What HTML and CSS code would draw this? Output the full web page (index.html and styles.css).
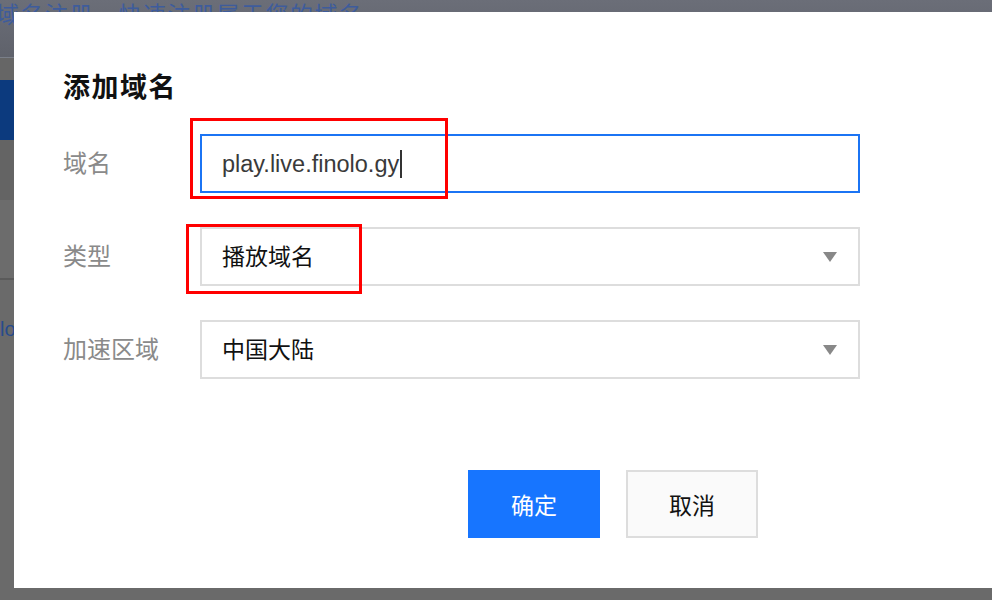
FILE: index.html
```html
<!DOCTYPE html>
<html lang="zh-CN">
<head>
<meta charset="utf-8">
<title>添加域名</title>
<link rel="stylesheet" href="styles.css">
</head>
<body>
<div class="page">
  <div class="topbar"><span class="crumb">域名注册，快速注册属于您的域名</span></div>
  <div class="band band-a"></div>
  <div class="band band-blue"></div>
  <div class="band band-b"></div>
  <div class="band band-c"></div>
  <div class="band band-d"><span class="link">Hello</span></div>
</div>

<div class="dialog">
  <h2 class="title">添加域名</h2>
  <div class="form">
    <div class="row">
      <label class="label">域名</label>
      <div class="field">
        <div class="input focused"><span class="value">play.live.finolo.gy</span><span class="caret"></span></div>
        <div class="mark mark-1"></div>
      </div>
    </div>
    <div class="row">
      <label class="label">类型</label>
      <div class="field">
        <div class="input select"><span class="value">播放域名</span><span class="arrow"></span></div>
        <div class="mark mark-2"></div>
      </div>
    </div>
    <div class="row">
      <label class="label">加速区域</label>
      <div class="field">
        <div class="input select"><span class="value">中国大陆</span><span class="arrow"></span></div>
      </div>
    </div>
  </div>
  <div class="actions">
    <button class="btn btn-primary">确定</button>
    <button class="btn btn-default">取消</button>
  </div>
</div>
</body>
</html>
```

FILE: styles.css
```css
html, body {
  margin: 0;
  padding: 0;
  width: 992px;
  height: 600px;
  overflow: hidden;
  background: #676767;
  font-family: "Liberation Sans", "Noto Sans CJK SC", sans-serif;
}

.page {
  width: 992px;
}

.topbar {
  height: 58px;
  background: linear-gradient(#6b6e78, #5f626b);
  border-bottom: 1px solid #7a7f89;
  box-sizing: border-box;
  overflow: hidden;
}

.crumb {
  display: block;
  margin-left: -4px;
  margin-top: 0;
  font-size: 23px;
  line-height: 30px;
  letter-spacing: 1.5px;
  color: #3e5c9c;
  white-space: nowrap;
}

.band { width: 100%; }
.band-a { height: 22px; background: #666666; }
.band-blue { height: 60px; background: #0c3a7e; }
.band-b { height: 60px; background: #646464; }
.band-c { height: 80px; background: #6c6c6c; border-bottom: 2px solid #5a5a5a; box-sizing: border-box; }
.band-d { height: 320px; background: #6a6a6a; padding-top: 36px; box-sizing: border-box; }

.link {
  display: block;
  margin-left: -30px;
  font-size: 20px;
  line-height: 26px;
  color: #274b8c;
}

.dialog {
  position: absolute;
  left: 14px;
  top: 12px;
  width: 1000px;
  height: 576px;
  background: #ffffff;
  padding: 58px 0 0 49px;
  box-sizing: border-box;
}

.title {
  margin: 0;
  font-size: 27px;
  line-height: 36px;
  font-weight: bold;
  color: #111111;
  letter-spacing: 1.5px;
}

.form {
  margin-top: 28px;
  display: flex;
  flex-direction: column;
  gap: 34px;
}

.row {
  display: flex;
  align-items: center;
  height: 59px;
}

.label {
  width: 137px;
  font-size: 24px;
  color: #8a8a8a;
  line-height: 30px;
}

.field {
  position: relative;
  width: 660px;
  height: 59px;
}

.input {
  height: 59px;
  box-sizing: border-box;
  border: 2px solid #dddddd;
  display: flex;
  align-items: center;
  padding-left: 20px;
  padding-right: 21px;
  background: #ffffff;
}

.input.focused {
  border-color: #1b74f4;
}

.value {
  font-size: 23px;
  line-height: 30px;
  color: #111111;
}

.focused .value {
  color: #3a3a3a;
  font-size: 23.5px;
}

.caret {
  display: inline-block;
  width: 2px;
  height: 28px;
  margin-left: 1px;
  background: #333333;
}

.arrow {
  margin-left: auto;
  width: 0;
  height: 0;
  border-left: 7.5px solid transparent;
  border-right: 7.5px solid transparent;
  border-top: 10px solid #888888;
}

.mark {
  position: absolute;
  border: 3px solid #ff0000;
  box-sizing: border-box;
  pointer-events: none;
}

.mark-1 {
  left: -10px;
  top: -16px;
  width: 258px;
  height: 81px;
}

.mark-2 {
  left: -14px;
  top: -3px;
  width: 176px;
  height: 70px;
}

.actions {
  margin-top: 91px;
  margin-left: 405px;
  display: flex;
  gap: 26px;
}

.btn {
  width: 132px;
  height: 68px;
  box-sizing: border-box;
  font-family: "Liberation Sans", "Noto Sans CJK SC", sans-serif;
  font-size: 23px;
  padding: 0;
  cursor: pointer;
}

.btn-primary {
  background: #1775ff;
  border: none;
  color: #ffffff;
}

.btn-default {
  background: #fafafa;
  border: 2px solid #dddddd;
  color: #111111;
}
```
